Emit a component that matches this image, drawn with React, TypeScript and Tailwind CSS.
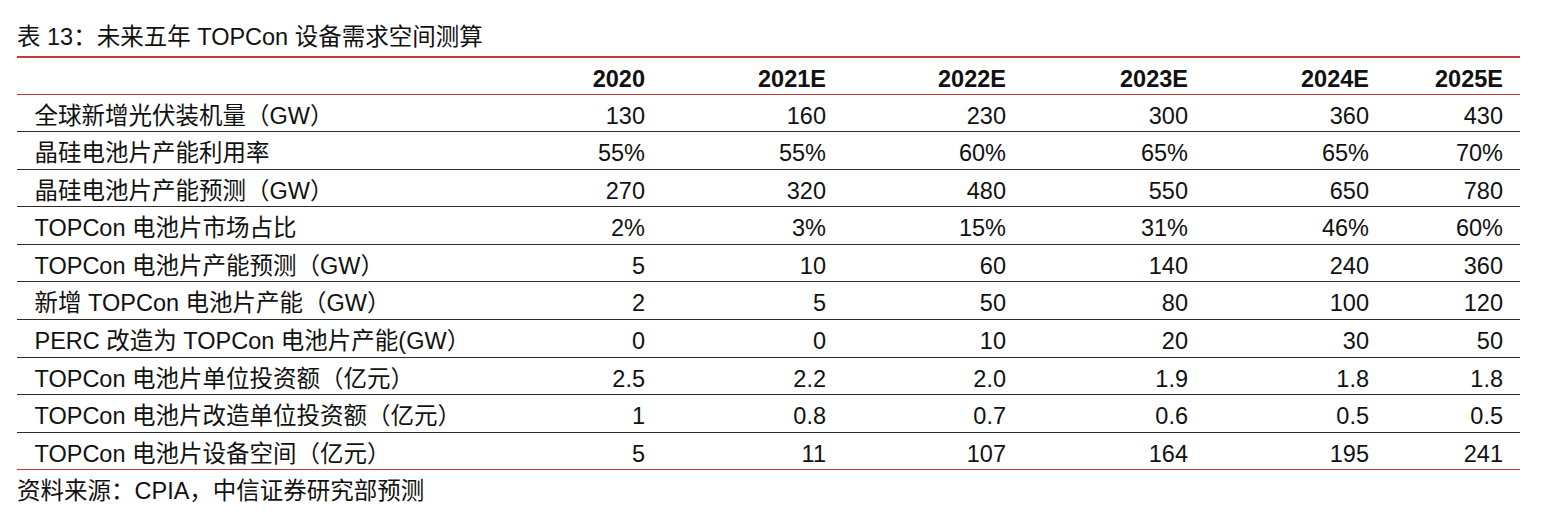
const years = ['2020', '2021E', '2022E', '2023E', '2024E', '2025E'];

const rows: { label: string; values: string[] }[] = [
  { label: '全球新增光伏装机量（GW）', values: ['130', '160', '230', '300', '360', '430'] },
  { label: '晶硅电池片产能利用率', values: ['55%', '55%', '60%', '65%', '65%', '70%'] },
  { label: '晶硅电池片产能预测（GW）', values: ['270', '320', '480', '550', '650', '780'] },
  { label: 'TOPCon 电池片市场占比', values: ['2%', '3%', '15%', '31%', '46%', '60%'] },
  { label: 'TOPCon 电池片产能预测（GW）', values: ['5', '10', '60', '140', '240', '360'] },
  { label: '新增 TOPCon 电池片产能（GW）', values: ['2', '5', '50', '80', '100', '120'] },
  { label: 'PERC 改造为 TOPCon 电池片产能(GW）', values: ['0', '0', '10', '20', '30', '50'] },
  { label: 'TOPCon 电池片单位投资额（亿元）', values: ['2.5', '2.2', '2.0', '1.9', '1.8', '1.8'] },
  { label: 'TOPCon 电池片改造单位投资额（亿元）', values: ['1', '0.8', '0.7', '0.6', '0.5', '0.5'] },
  { label: 'TOPCon 电池片设备空间（亿元）', values: ['5', '11', '107', '164', '195', '241'] },
];

const font = "font-['Liberation_Sans','Noto_Sans_CJK_SC',sans-serif]";
const grid = 'grid grid-cols-[448px_180px_181px_180px_182px_181px_151px]';

export default function App() {
  return (
    <div className={`w-[1556px] h-[530px] bg-white text-[#111] text-[23.5px] ${font}`}>
      <div className="pl-[17px] pt-[22px] h-[56px] leading-[30px]">表 13：未来五年 TOPCon 设备需求空间测算</div>

      <div className="ml-[17px] w-[1503px]">
        <div className="h-[1.5px] bg-[#c33b35]" />
        <div className={`${grid} h-[37px] border-b-[1.5px] border-[#c33b35] font-bold`}>
          <div />
          {years.map((y, i) => (
            <div key={y} className={`flex items-center justify-end pt-[4px] ${i === 5 ? 'pr-[17px]' : ''}`}>
              {y}
            </div>
          ))}
        </div>

        {rows.map((r, ri) => (
          <div
            key={r.label}
            className={`${grid} h-[37.6px] ${ri === rows.length - 1 ? 'border-b-[1.5px] border-[#c33b35]' : 'border-b border-[#2b2b2b]'}`}
          >
            <div className="flex items-center pl-[17.5px] pt-[4px] whitespace-nowrap">{r.label}</div>
            {r.values.map((v, i) => (
              <div key={i} className={`flex items-center justify-end pt-[4px] ${i === 5 ? 'pr-[17px]' : ''}`}>
                {v}
              </div>
            ))}
          </div>
        ))}
      </div>

      <div className="pl-[17px] pt-[6px] leading-[30px]">资料来源：CPIA，中信证券研究部预测</div>
    </div>
  );
}
